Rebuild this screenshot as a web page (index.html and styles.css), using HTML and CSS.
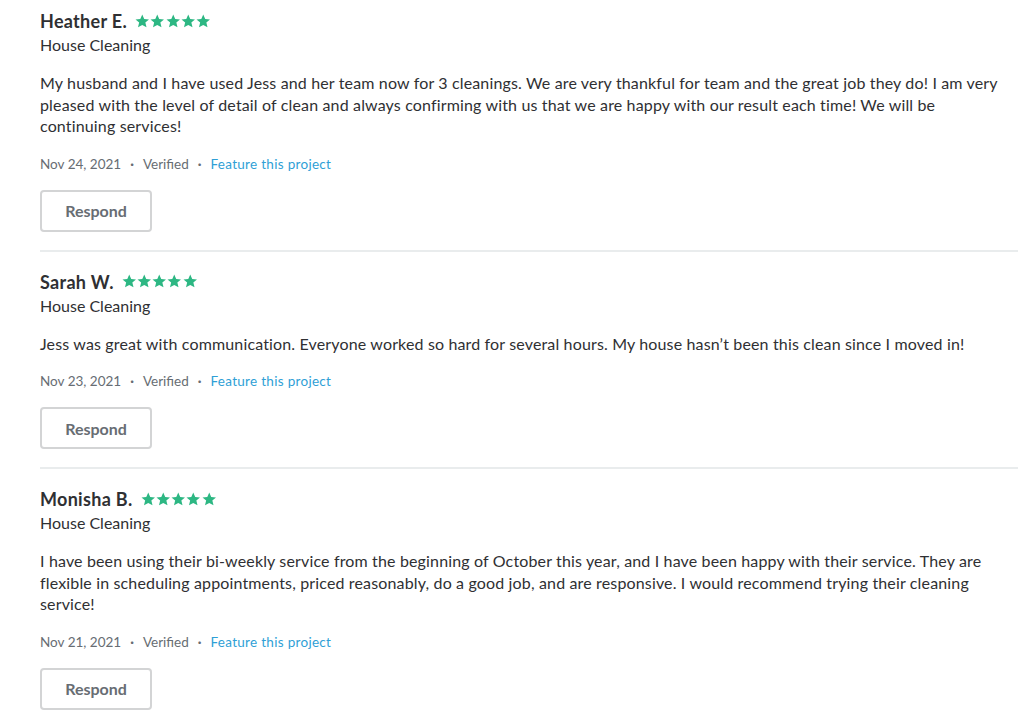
FILE: index.html
```html
<!DOCTYPE html>
<html lang="en">
<head>
    <meta charset="UTF-8">
    <meta name="viewport" content="width=device-width, initial-scale=1.0">
    <title>Reviews</title>
    <link rel="stylesheet" href="styles.css">
</head>
<body>
    <div class="reviews">
        <div class="review">
            <div class="review-head">
                <span class="reviewer">Heather E.</span>
                <span class="stars">
                    <svg viewBox="0 0 14 14"><path d="M7 .6l1.9 4.3 4.6.4-3.5 3 1.1 4.6L7 10.5l-4.1 2.4 1.1-4.6-3.5-3 4.6-.4z"/></svg>
                    <svg viewBox="0 0 14 14"><path d="M7 .6l1.9 4.3 4.6.4-3.5 3 1.1 4.6L7 10.5l-4.1 2.4 1.1-4.6-3.5-3 4.6-.4z"/></svg>
                    <svg viewBox="0 0 14 14"><path d="M7 .6l1.9 4.3 4.6.4-3.5 3 1.1 4.6L7 10.5l-4.1 2.4 1.1-4.6-3.5-3 4.6-.4z"/></svg>
                    <svg viewBox="0 0 14 14"><path d="M7 .6l1.9 4.3 4.6.4-3.5 3 1.1 4.6L7 10.5l-4.1 2.4 1.1-4.6-3.5-3 4.6-.4z"/></svg>
                    <svg viewBox="0 0 14 14"><path d="M7 .6l1.9 4.3 4.6.4-3.5 3 1.1 4.6L7 10.5l-4.1 2.4 1.1-4.6-3.5-3 4.6-.4z"/></svg>
                </span>
            </div>
            <div class="service">House Cleaning</div>
            <p class="review-text">My husband and I have used Jess and her team now for 3 cleanings. We are very thankful for team and the great job they do! I am very pleased with the level of detail of clean and always confirming with us that we are happy with our result each time! We will be continuing services!</p>
            <div class="meta">
                <span>Nov 24, 2021</span>
                <span class="dot">·</span>
                <span>Verified</span>
                <span class="dot">·</span>
                <a href="#">Feature this project</a>
            </div>
            <button class="btn-respond">Respond</button>
        </div>

        <div class="review">
            <div class="review-head">
                <span class="reviewer">Sarah W.</span>
                <span class="stars">
                    <svg viewBox="0 0 14 14"><path d="M7 .6l1.9 4.3 4.6.4-3.5 3 1.1 4.6L7 10.5l-4.1 2.4 1.1-4.6-3.5-3 4.6-.4z"/></svg>
                    <svg viewBox="0 0 14 14"><path d="M7 .6l1.9 4.3 4.6.4-3.5 3 1.1 4.6L7 10.5l-4.1 2.4 1.1-4.6-3.5-3 4.6-.4z"/></svg>
                    <svg viewBox="0 0 14 14"><path d="M7 .6l1.9 4.3 4.6.4-3.5 3 1.1 4.6L7 10.5l-4.1 2.4 1.1-4.6-3.5-3 4.6-.4z"/></svg>
                    <svg viewBox="0 0 14 14"><path d="M7 .6l1.9 4.3 4.6.4-3.5 3 1.1 4.6L7 10.5l-4.1 2.4 1.1-4.6-3.5-3 4.6-.4z"/></svg>
                    <svg viewBox="0 0 14 14"><path d="M7 .6l1.9 4.3 4.6.4-3.5 3 1.1 4.6L7 10.5l-4.1 2.4 1.1-4.6-3.5-3 4.6-.4z"/></svg>
                </span>
            </div>
            <div class="service">House Cleaning</div>
            <p class="review-text">Jess was great with communication. Everyone worked so hard for several hours. My house hasn’t been this clean since I moved in!</p>
            <div class="meta">
                <span>Nov 23, 2021</span>
                <span class="dot">·</span>
                <span>Verified</span>
                <span class="dot">·</span>
                <a href="#">Feature this project</a>
            </div>
            <button class="btn-respond">Respond</button>
        </div>

        <div class="review">
            <div class="review-head">
                <span class="reviewer">Monisha B.</span>
                <span class="stars">
                    <svg viewBox="0 0 14 14"><path d="M7 .6l1.9 4.3 4.6.4-3.5 3 1.1 4.6L7 10.5l-4.1 2.4 1.1-4.6-3.5-3 4.6-.4z"/></svg>
                    <svg viewBox="0 0 14 14"><path d="M7 .6l1.9 4.3 4.6.4-3.5 3 1.1 4.6L7 10.5l-4.1 2.4 1.1-4.6-3.5-3 4.6-.4z"/></svg>
                    <svg viewBox="0 0 14 14"><path d="M7 .6l1.9 4.3 4.6.4-3.5 3 1.1 4.6L7 10.5l-4.1 2.4 1.1-4.6-3.5-3 4.6-.4z"/></svg>
                    <svg viewBox="0 0 14 14"><path d="M7 .6l1.9 4.3 4.6.4-3.5 3 1.1 4.6L7 10.5l-4.1 2.4 1.1-4.6-3.5-3 4.6-.4z"/></svg>
                    <svg viewBox="0 0 14 14"><path d="M7 .6l1.9 4.3 4.6.4-3.5 3 1.1 4.6L7 10.5l-4.1 2.4 1.1-4.6-3.5-3 4.6-.4z"/></svg>
                </span>
            </div>
            <div class="service">House Cleaning</div>
            <p class="review-text">I have been using their bi-weekly service from the beginning of October this year, and I have been happy with their service. They are flexible in scheduling appointments, priced reasonably, do a good job, and are responsive. I would recommend trying their cleaning service!</p>
            <div class="meta">
                <span>Nov 21, 2021</span>
                <span class="dot">·</span>
                <span>Verified</span>
                <span class="dot">·</span>
                <a href="#">Feature this project</a>
            </div>
            <button class="btn-respond">Respond</button>
        </div>
    </div>
</body>
</html>
```

FILE: styles.css
```css
* {
    margin: 0;
    padding: 0;
    box-sizing: border-box;
}

body {
    font-family: Lato, 'Noto Sans', sans-serif;
    background: white;
    color: #2f3033;
    padding: 0 6px 0 40px;
}

.review {
    padding: 19px 0 18px;
    border-bottom: 2px solid #e9eced;
}

.review:first-child {
    padding-top: 10px;
}

.review:last-child {
    border-bottom: none;
}

.review-head {
    display: flex;
    align-items: center;
    height: 22px;
}

.reviewer {
    font-size: 18px;
    font-weight: 700;
    letter-spacing: 0.3px;
    color: #2f3033;
}

.stars {
    display: flex;
    gap: 0.75px;
    margin-left: 8px;
}

.stars svg {
    width: 14.5px;
    height: 14.5px;
    fill: #2db783;
}

.service {
    font-size: 16px;
    line-height: 24px;
    margin-top: 1px;
}

.review-text {
    font-size: 16px;
    line-height: 21.5px;
    letter-spacing: 0.15px;
    margin-top: 15px;
    padding-right: 12px;
}

.meta {
    display: flex;
    align-items: center;
    gap: 9px;
    font-size: 13.5px;
    line-height: 20px;
    color: #676d73;
    margin-top: 17px;
}

.meta .dot {
    font-weight: 700;
}

.meta a {
    color: #2f9fd6;
    letter-spacing: 0.3px;
    text-decoration: none;
}

.btn-respond {
    display: block;
    width: 112px;
    height: 42px;
    margin-top: 16px;
    background: white;
    border: 2px solid #d3d4d5;
    border-radius: 4px;
    font-family: inherit;
    font-size: 16px;
    font-weight: 700;
    color: #676d73;
}
```
